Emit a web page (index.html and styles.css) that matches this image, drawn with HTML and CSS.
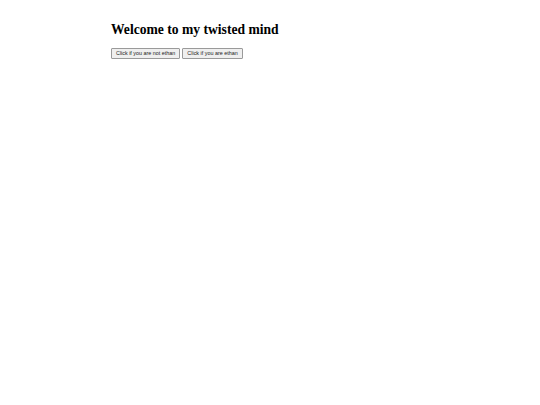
FILE: index.html
```html
<!DOCTYPE html>
<html>
<head>
<meta charset="utf-8">
<link rel="stylesheet" href="styles.css">
</head>
<body>
<main class="page">
  <h1 class="title">Welcome to my twisted mind</h1>
  <div class="actions">
    <button class="btn">Click if you are not ethan</button>
    <button class="btn">Click if you are ethan</button>
  </div>
</main>
</body>
</html>
```
FILE: styles.css
```css
html, body {
  margin: 0;
  padding: 0;
  background: #fff;
}
.page {
  padding: 21px 0 0 111px;
}
.title {
  margin: 0;
  font-family: "Liberation Serif", "Times New Roman", serif;
  font-weight: bold;
  font-size: 13.6px;
  line-height: 17px;
  color: #000;
}
.actions {
  display: flex;
  gap: 2px;
  margin-top: 10px;
}
.btn {
  font-family: "Liberation Sans", Arial, sans-serif;
  font-size: 5.4px;
  line-height: 7px;
  padding: 1px 4px;
  margin: 0;
  background: #efefef;
  border: 1px solid #9a9a9a;
  border-radius: 1px;
  color: #222;
}
```
